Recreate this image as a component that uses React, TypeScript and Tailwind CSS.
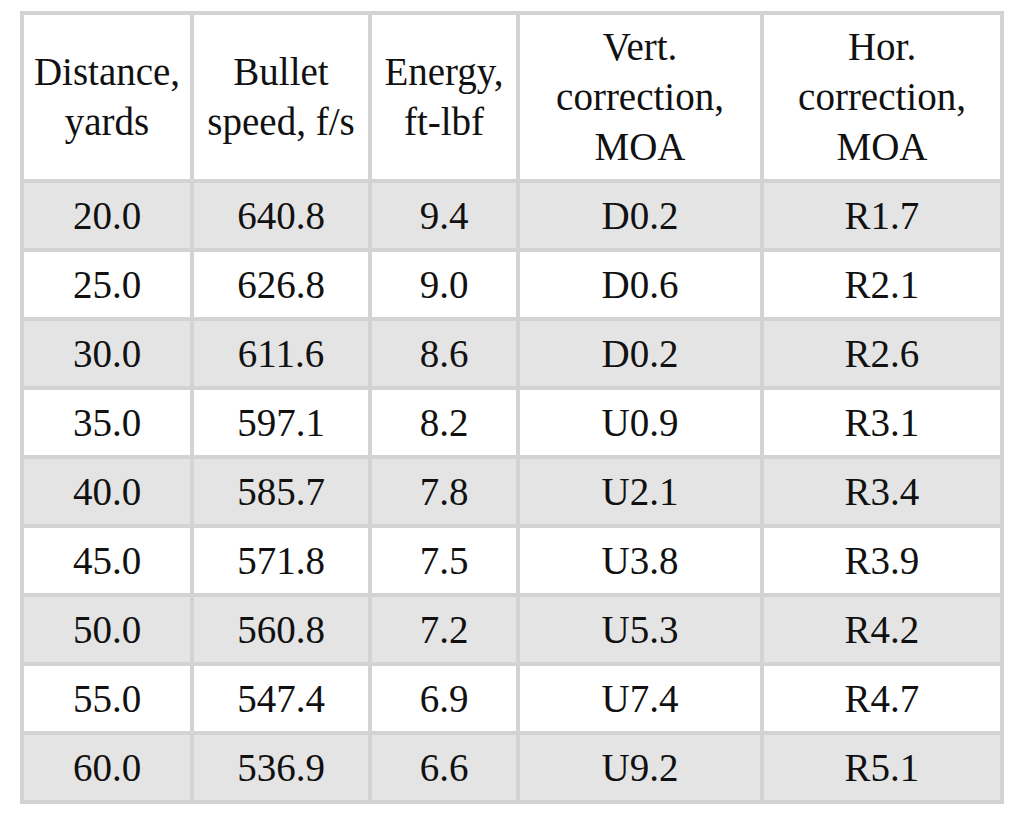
const HEADERS = [
  ['Distance,', 'yards'],
  ['Bullet', 'speed, f/s'],
  ['Energy,', 'ft-lbf'],
  ['Vert.', 'correction,', 'MOA'],
  ['Hor.', 'correction,', 'MOA'],
]

const ROWS = [
  ['20.0', '640.8', '9.4', 'D0.2', 'R1.7'],
  ['25.0', '626.8', '9.0', 'D0.6', 'R2.1'],
  ['30.0', '611.6', '8.6', 'D0.2', 'R2.6'],
  ['35.0', '597.1', '8.2', 'U0.9', 'R3.1'],
  ['40.0', '585.7', '7.8', 'U2.1', 'R3.4'],
  ['45.0', '571.8', '7.5', 'U3.8', 'R3.9'],
  ['50.0', '560.8', '7.2', 'U5.3', 'R4.2'],
  ['55.0', '547.4', '6.9', 'U7.4', 'R4.7'],
  ['60.0', '536.9', '6.6', 'U9.2', 'R5.1'],
]

export default function App() {
  return (
    <div className="min-h-[821px] w-[1024px] bg-white pt-[11px] pl-[20px] font-['Liberation_Serif','Times_New_Roman',serif] text-[#111]">
      <table className="w-[984px] table-fixed border-separate border-spacing-1 bg-[#d3d3d3] text-[39px] leading-[50px]">
        <colgroup>
          <col className="w-[166px]" />
          <col className="w-[174px]" />
          <col className="w-[144px]" />
          <col className="w-[240px]" />
          <col className="w-[236px]" />
        </colgroup>
        <thead>
          <tr>
            {HEADERS.map((lines, i) => (
              <th key={i} className="h-[164px] bg-white p-0 text-center align-middle font-normal">
                {lines.map((l) => (
                  <div key={l}>{l}</div>
                ))}
              </th>
            ))}
          </tr>
        </thead>
        <tbody>
          {ROWS.map((row, r) => (
            <tr key={r}>
              {row.map((cell, c) => (
                <td
                  key={c}
                  className={`h-[65px] p-0 text-center align-middle ${r % 2 === 0 ? 'bg-[#e4e4e4]' : 'bg-white'}`}
                >
                  {cell}
                </td>
              ))}
            </tr>
          ))}
        </tbody>
      </table>
    </div>
  )
}
